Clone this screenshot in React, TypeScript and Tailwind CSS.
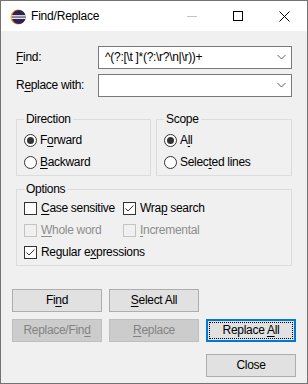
import React from "react";

const font = { fontFamily: '"Liberation Sans", Arial, sans-serif' };

function U({ children }: { children: React.ReactNode }) {
  return <span className="underline decoration-1 underline-offset-[2px]">{children}</span>;
}

function Combo({ value }: { value: string }) {
  return (
    <div className="w-[194px] h-[23px] bg-white border border-[#7a7a7a] flex items-center pl-[6px] pr-[5px]">
      <span className="flex-1 whitespace-nowrap text-black">{value}</span>
      <svg width="9" height="6" viewBox="0 0 9 6" className="mb-[1px]">
        <path d="M0.5 1 L4.5 5 L8.5 1" fill="none" stroke="#606060" strokeWidth="1" />
      </svg>
    </div>
  );
}

function Radio({ checked, children }: { checked?: boolean; children: React.ReactNode }) {
  return (
    <div className="h-[22px] flex items-center">
      <span className="w-[13px] h-[13px] rounded-full border border-[#333333] bg-white flex items-center justify-center">
        {checked && <span className="w-[7px] h-[7px] rounded-full bg-[#333333]" />}
      </span>
      <span className="ml-[3px]">{children}</span>
    </div>
  );
}

function Check({ checked, disabled, children }: { checked?: boolean; disabled?: boolean; children: React.ReactNode }) {
  return (
    <div className="h-[22px] flex items-center">
      <span
        className={
          disabled
            ? "w-[13px] h-[13px] border border-[#c4c4c4] bg-[#f0f0f0] flex items-center justify-center"
            : "w-[13px] h-[13px] border border-[#333333] bg-white flex items-center justify-center"
        }
      >
        {checked && (
          <svg width="11" height="11" viewBox="0 0 11 11">
            <path d="M1.5 5.5 L4 8 L9.5 2.5" fill="none" stroke="#333333" strokeWidth="1" />
          </svg>
        )}
      </span>
      <span className={disabled ? "ml-[4px] text-[#8d8d8d]" : "ml-[4px]"}>{children}</span>
    </div>
  );
}

function Group({ label, className, children }: { label: string; className: string; children: React.ReactNode }) {
  return (
    <div className={"relative border border-[#dcdcdc] " + className}>
      <span className="absolute -top-[8px] left-[7px] bg-[#f0f0f0] px-[2px] leading-[15px]">{label}</span>
      {children}
    </div>
  );
}

function Btn({ children, disabled, def }: { children: React.ReactNode; disabled?: boolean; def?: boolean }) {
  let cls = "w-[90px] h-[23px] flex items-center justify-center ";
  if (disabled) cls += "bg-[#cccccc] border border-[#bfbfbf] text-[#838383]";
  else if (def)
    cls += "bg-[#e1e1e1] border-2 border-[#0078d7] outline-1 outline-dotted outline-black outline-offset-[-4px]";
  else cls += "bg-[#e1e1e1] border border-[#adadad]";
  return (
    <div className={cls}>
      <span className="whitespace-pre">{children}</span>
    </div>
  );
}

export default function App() {
  return (
    <div
      className="w-[308px] h-[384px] border border-[#737373] bg-[#f0f0f0] flex flex-col text-[12px] leading-[15px] text-black tracking-[-0.3px]"
      style={font}
    >
      {/* Title bar */}
      <div className="h-[30px] bg-white flex items-center shrink-0">
        <svg width="16" height="16" viewBox="0 0 16 16" className="ml-[9px] mt-[1px]">
          <circle cx="8" cy="8" r="7.5" fill="#f7941e" />
          <circle cx="8.8" cy="8" r="6.9" fill="#2c2255" />
          <rect x="1.5" y="6.2" width="14" height="1.3" fill="#ffffff" />
          <rect x="1.5" y="8.6" width="14" height="1.3" fill="#ffffff" />
        </svg>
        <span className="ml-[5px] text-[12px] mt-[1px] tracking-[-0.2px]">Find/Replace</span>
        <div className="ml-auto flex h-full">
          <div className="w-[46px] h-full flex items-center justify-center">
            <span className="w-[10px] h-[1px] bg-[#c4c4c4]" />
          </div>
          <div className="w-[46px] h-full flex items-center justify-center">
            <span className="w-[10px] h-[10px] border border-black" />
          </div>
          <div className="w-[46px] h-full flex items-center justify-center">
            <svg width="11" height="11" viewBox="0 0 11 11">
              <path d="M0.5 0.5 L10.5 10.5 M10.5 0.5 L0.5 10.5" stroke="#000" strokeWidth="1" />
            </svg>
          </div>
        </div>
      </div>

      {/* Body */}
      <div className="flex flex-col pt-[15px]">
        <div className="px-[15px] flex flex-col gap-[5px]">
          <div className="flex items-center h-[23px]">
            <span className="w-[82px]">
              <U>F</U>ind:
            </span>
            <Combo value={"^(?:[\\t ]*(?:\\r?\\n|\\r))+"} />
          </div>
          <div className="flex items-center h-[23px]">
            <span className="w-[82px]">
              R<U>e</U>place with:
            </span>
            <Combo value="" />
          </div>
        </div>

        <div className="px-[15px] mt-[22px] flex gap-[5px]">
          <Group label="Direction" className="w-[135px] h-[57px] pt-[9px] pl-[7px]">
            <Radio checked>
              F<U>o</U>rward
            </Radio>
            <Radio>
              <U>B</U>ackward
            </Radio>
          </Group>
          <Group label="Scope" className="w-[136px] h-[57px] pt-[9px] pl-[7px]">
            <Radio checked>
              A<U>l</U>l
            </Radio>
            <Radio>
              Selec<U>t</U>ed lines
            </Radio>
          </Group>
        </div>

        <div className="px-[15px] mt-[13px]">
          <Group label="Options" className="w-[276px] h-[77px] pt-[7px] pl-[7px]">
            <div className="grid grid-cols-[99px_1fr]">
              <Check>
                <U>C</U>ase sensitive
              </Check>
              <Check checked>
                Wra<U>p</U> search
              </Check>
              <Check disabled>
                <U>W</U>hole word
              </Check>
              <Check disabled>
                <U>I</U>ncremental
              </Check>
              <div className="col-span-2">
                <Check checked>
                  Regular e<U>x</U>pressions
                </Check>
              </div>
            </div>
          </Group>
        </div>

        <div className="px-[11px] mt-[23px] flex flex-col">
          <div className="flex gap-[7px]">
            <Btn>
              Fi<U>n</U>d
            </Btn>
            <Btn>
              <U>S</U>elect All
            </Btn>
          </div>
          <div className="flex gap-[7px] mt-[7px]">
            <Btn disabled>
              Replace/Fin<U>d</U>
            </Btn>
            <Btn disabled>
              <U>R</U>eplace
            </Btn>
            <Btn def>
              {"Replace "}
              <U>A</U>ll
            </Btn>
          </div>
          <div className="flex justify-end mt-[12px]">
            <Btn>Close</Btn>
          </div>
        </div>
      </div>
    </div>
  );
}
